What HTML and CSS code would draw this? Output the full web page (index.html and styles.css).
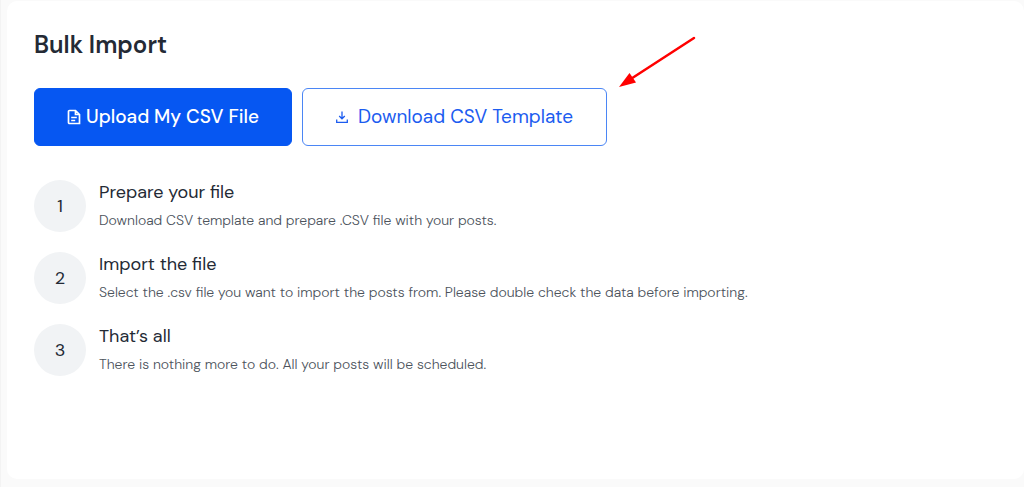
FILE: index.html
```
<!DOCTYPE html>
<html lang="en">
<head>
    <meta charset="UTF-8">
    <meta name="viewport" content="width=device-width, initial-scale=1.0">
    <title>Bulk Import</title>
    <link rel="stylesheet" href="styles.css">
</head>
<body>
    <main class="card">
        <h1>Bulk Import</h1>
        <div class="actions">
            <button type="button" class="btn btn-primary">
                <svg class="icon-file" viewBox="0 0 14 16" aria-hidden="true">
                    <path d="M2.5 1.5h6l4 4v9h-10a1 1 0 0 1-1-1v-11a1 1 0 0 1 1-1z M8.5 1.5v4h4 M4.2 8.5h5.6 M4.2 11.5h4"/>
                </svg>
                Upload My CSV File
            </button>
            <div class="download">
                <button type="button" class="btn btn-outline">
                    <svg class="icon-download" viewBox="0 0 12 12" aria-hidden="true">
                        <path d="M6 .5v7 M3.2 5L6 7.8 8.8 5 M.7 8.5v2.8h10.6v-2.8"/>
                    </svg>
                    Download CSV Template
                </button>
                <svg class="arrow" viewBox="0 0 80 54" aria-hidden="true">
                    <path class="arrow-line" d="M12 43.5L76 2"/>
                    <path class="arrow-head" d="M1 51L11.5 37 18 46.5z"/>
                </svg>
            </div>
        </div>
        <ol class="steps">
            <li class="step">
                <span class="step-number">1</span>
                <div class="step-text">
                    <h2>Prepare your file</h2>
                    <p>Download CSV template and prepare .CSV file with your posts.</p>
                </div>
            </li>
            <li class="step">
                <span class="step-number">2</span>
                <div class="step-text">
                    <h2>Import the file</h2>
                    <p>Select the .csv file you want to import the posts from. Please double check the data before importing.</p>
                </div>
            </li>
            <li class="step">
                <span class="step-number">3</span>
                <div class="step-text">
                    <h2>That’s all</h2>
                    <p>There is nothing more to do. All your posts will be scheduled.</p>
                </div>
            </li>
        </ol>
    </main>
</body>
</html>
```
FILE: styles.css
```
* {
    box-sizing: border-box;
}
body {
    margin: 0;
    min-height: 100vh;
    display: flex;
    padding: 1px 0 8px 6px;
    border-left: 1px solid #f3f3f3;
    background-color: #fafafa;
    font-family: "DM Sans", Inter, sans-serif;
    color: #242a35;
}
.card {
    flex: 1;
    padding: 27px;
    background-color: #fff;
    border-radius: 10px;
}
h1 {
    margin: 0 0 26px;
    font-size: 24px;
    line-height: 34px;
    font-weight: 600;
}
.actions {
    display: flex;
    flex-wrap: wrap;
    gap: 10px;
}
.btn {
    display: flex;
    align-items: center;
    padding: 16px 32px;
    border: 1px solid #0657f2;
    border-radius: 6px;
    font-family: inherit;
    font-size: 19px;
    line-height: 24px;
    cursor: pointer;
}
.btn-primary {
    gap: 5px;
    background-color: #0657f2;
    color: #fff;
    font-weight: 500;
}
.btn-outline {
    gap: 10px;
    padding: 16px 33px;
    background-color: #fff;
    border-color: #4b86f5;
    color: #1c5cf0;
}
.btn svg {
    fill: none;
    stroke: currentColor;
}
.icon-file {
    width: 14px;
    height: 16px;
    stroke-width: 1.7;
}
.icon-download {
    width: 12px;
    height: 12px;
    stroke-width: 1.3;
}
.download {
    position: relative;
}
/* arrow pointing at the template button */
.arrow {
    position: absolute;
    left: 100%;
    bottom: 100%;
    width: 80px;
    height: 54px;
    margin: 0 0 -2px 11px;
}
.arrow-line {
    fill: none;
    stroke: #f00;
    stroke-width: 2.5;
    stroke-linecap: round;
}
.arrow-head {
    fill: #f00;
}
.steps {
    display: flex;
    flex-direction: column;
    gap: 20px;
    margin: 34px 0 0;
    padding: 0;
    list-style: none;
}
.step {
    display: flex;
    gap: 13px;
}
.step-number {
    flex: none;
    width: 52px;
    height: 52px;
    border-radius: 50%;
    background-color: #f1f3f5;
    font-size: 18px;
    line-height: 52px;
    text-align: center;
}
h2 {
    margin: 0 0 5px;
    font-size: 18px;
    line-height: 24px;
    font-weight: 400;
}
.step p {
    margin: 0;
    font-size: 14px;
    line-height: 22px;
    font-weight: 300;
    color: #4c535c;
}
```
